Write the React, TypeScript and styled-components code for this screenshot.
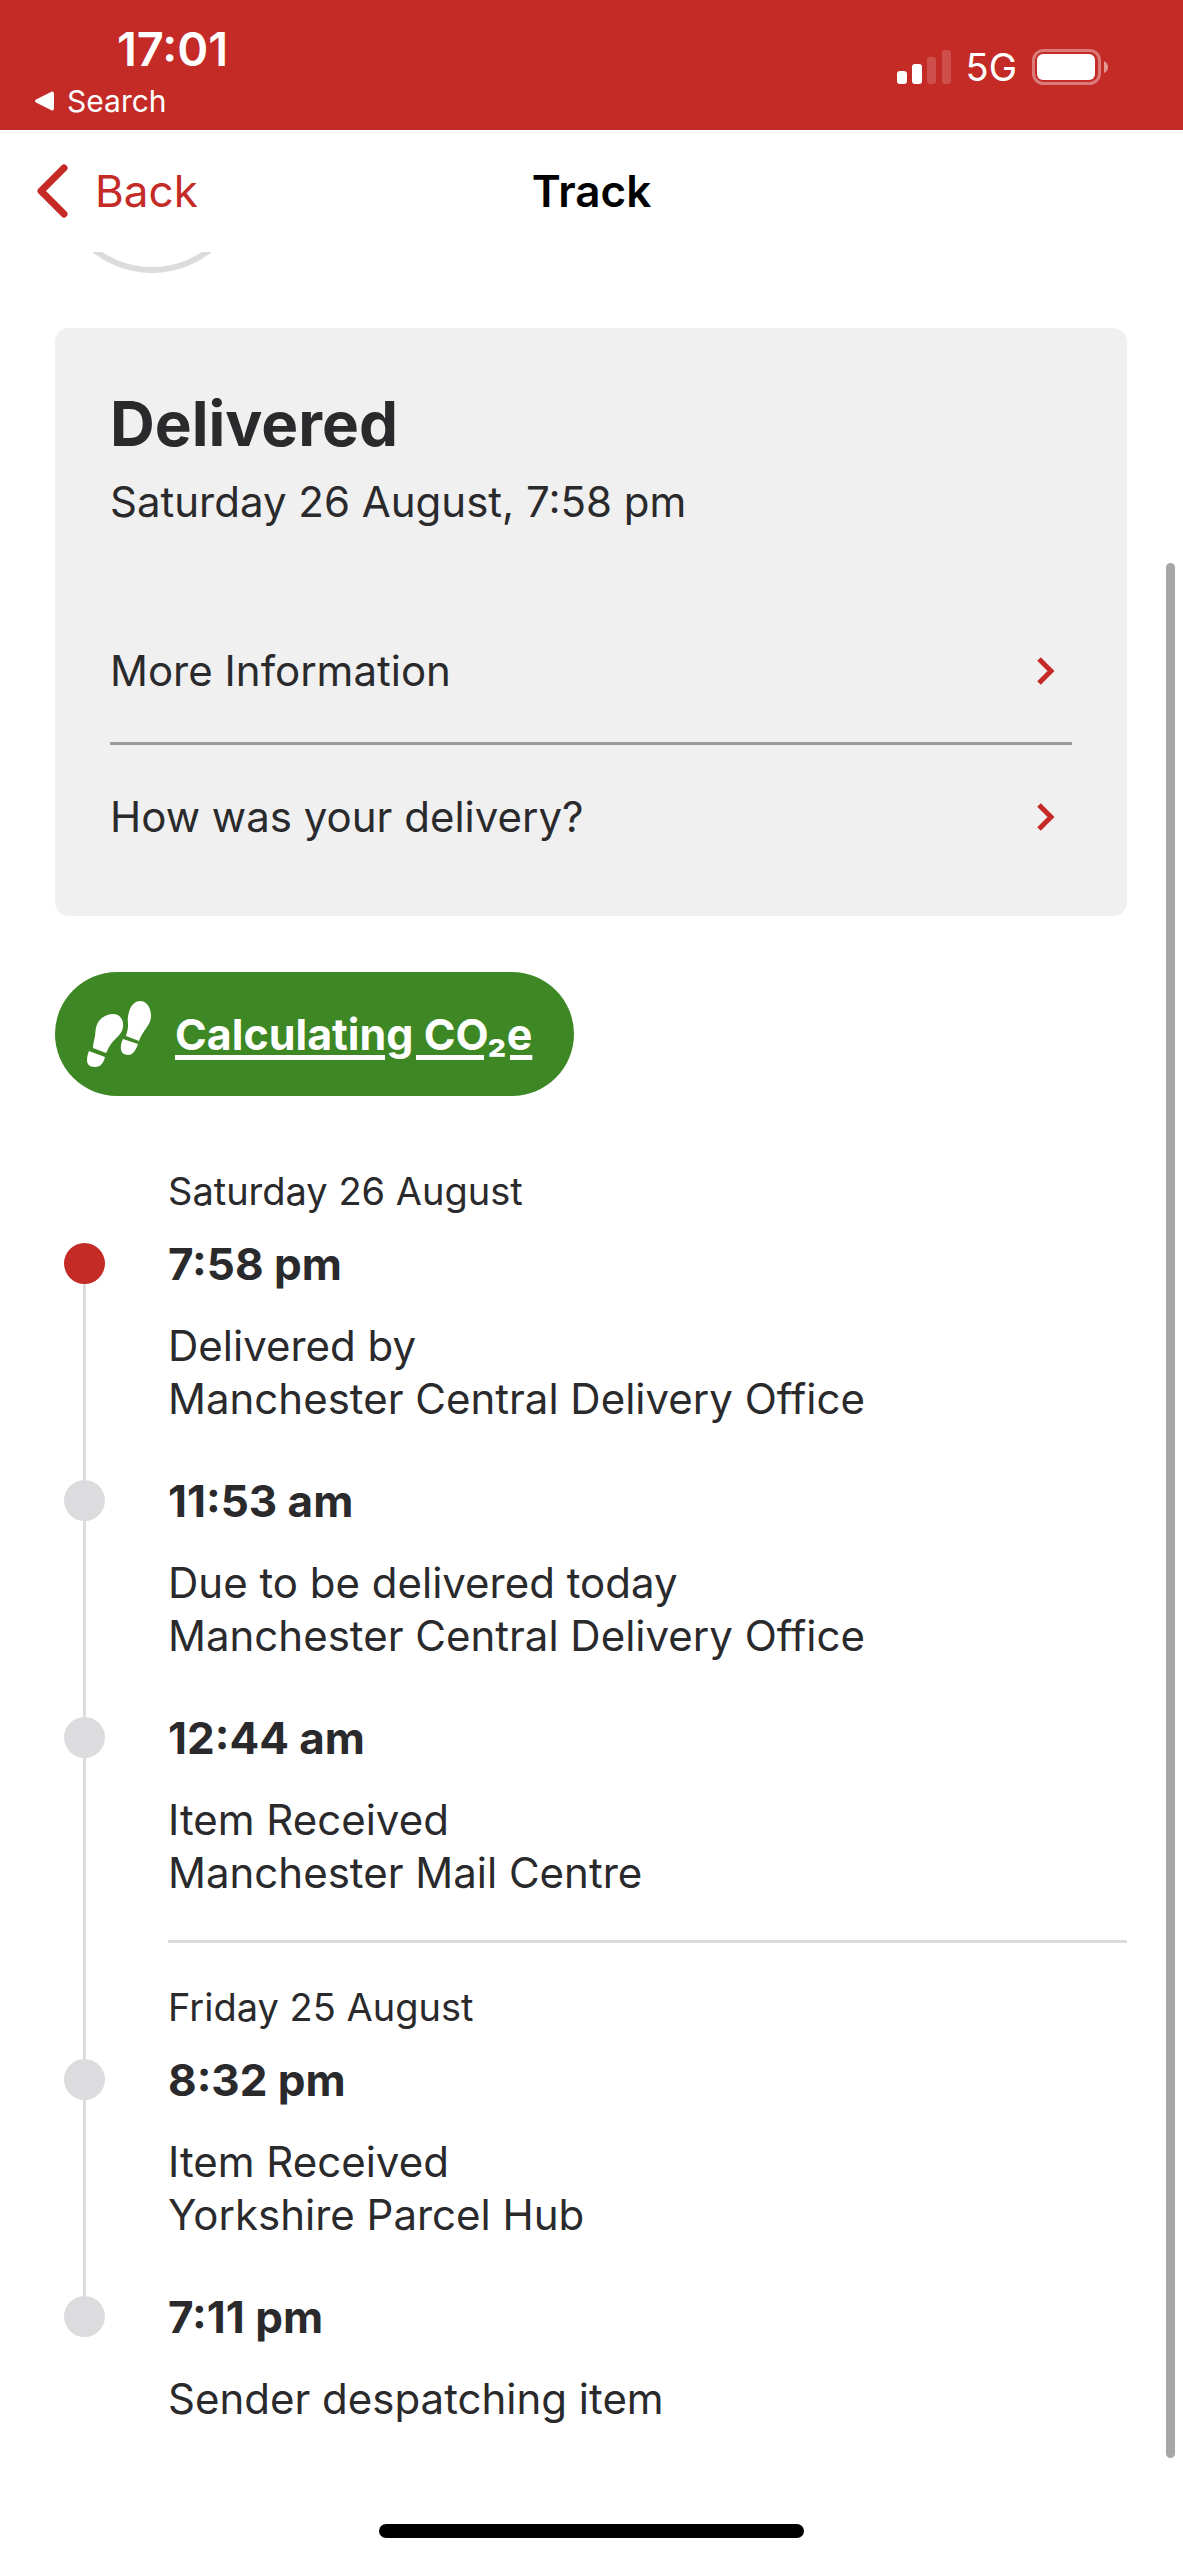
import React from "react";
import styled, { createGlobalStyle } from "styled-components";

const RED = "#c42b27";
const INK = "#2a2a2d";
const RULE = "#dcdcde";

const GlobalStyle = createGlobalStyle`
  *, *::before, *::after { box-sizing: border-box; }
  body {
    margin: 0;
    background: #fff;
    color: ${INK};
    font-family: Inter, "Liberation Sans", sans-serif;
  }
  h1, h2, h3, p, ol, ul { margin: 0; padding: 0; }
  ol, ul { list-style: none; }
  button { font: inherit; color: inherit; background: none; border: 0; padding: 0; cursor: pointer; }
`;

const Page = styled.div`
  position: relative;
  display: flex;
  flex-direction: column;
  min-height: 100vh;
`;

const StatusBar = styled.header`
  display: flex;
  justify-content: space-between;
  padding: 19px 75px 7px 34px;
  background: ${RED};
  color: #fff;
`;

const StatusLeft = styled.div`
  display: flex;
  flex-direction: column;
  align-items: flex-start;
`;

const Clock = styled.span`
  padding-left: 83px;
  font-size: 47px;
  line-height: 60px;
  font-weight: 600;
`;

const ReturnButton = styled.button`
  display: flex;
  align-items: center;
  gap: 12px;
  font-size: 30px;
  line-height: 44px;
`;

const StatusRight = styled.div`
  display: flex;
  align-items: center;
  gap: 15px;
  height: 96px;
  font-size: 38px;
`;

const NavBar = styled.nav`
  display: grid;
  grid-template-columns: 1fr auto 1fr;
  align-items: center;
  height: 122px;
  padding: 0 36px;
  font-size: 44px;
`;

const BackButton = styled.button`
  display: flex;
  align-items: center;
  justify-self: start;
  gap: 27px;
  color: ${RED};
`;

const NavTitle = styled.h1`
  font-size: 44px;
  font-weight: 600;
  color: #000;
`;

const Main = styled.main`
  flex: 1;
  padding: 0 56px 0 55px;
`;

const Peek = styled.div`
  height: 76px;
  padding-left: 37px;
`;

const Card = styled.section`
  padding: 56px 55px 28px;
  border-radius: 14px;
  background: #f0f0f0;
`;

const CardTitle = styled.h2`
  font-size: 62px;
  line-height: 80px;
  font-weight: 700;
`;

const CardTime = styled.p`
  margin-top: 11px;
  margin-bottom: 70px;
  font-size: 42px;
  line-height: 54px;
`;

const CardRow = styled.button`
  display: flex;
  align-items: center;
  justify-content: space-between;
  width: 100%;
  height: 143px;
  padding-right: 17px;
  font-size: 42px;
  text-align: left;
`;

const CardRule = styled.hr`
  height: 3px;
  margin: 0;
  border: 0;
  background: #9b9b9b;
`;

const CarbonLink = styled.a`
  display: inline-flex;
  align-items: center;
  gap: 22px;
  height: 124px;
  margin-top: 56px;
  padding: 0 42px 0 32px;
  border-radius: 62px;
  background: #3d8825;
  color: #fff;
  font-size: 43px;
  font-weight: 700;
  text-decoration: underline;
  text-decoration-thickness: 5px;
  text-underline-offset: 5px;
  vertical-align: top;
`;

const Timeline = styled.ol`
  padding-top: 72px;
`;

const Row = styled.div`
  display: grid;
  grid-template-columns: 59px 1fr;
  column-gap: 54px;
`;

const Rail = styled.div`
  display: flex;
  flex-direction: column;
  align-items: center;
`;

const Line = styled.span`
  flex: 1;
  width: 3px;
  background: ${RULE};
`;

const Dot = styled.span<{ $current?: boolean }>`
  width: 41px;
  height: 41px;
  border-radius: 50%;
  background: ${(p) => (p.$current ? RED : RULE)};
`;

const DayHead = styled.div<{ $ruled?: boolean }>`
  padding-top: ${(p) => (p.$ruled ? 41 : 0)}px;
  padding-bottom: 29px;
  border-top: ${(p) => (p.$ruled ? `3px solid ${RULE}` : "0")};
`;

const DayName = styled.h3`
  font-size: 38px;
  line-height: 46px;
  font-weight: 400;
`;

const Event = styled.div<{ $gap: number }>`
  padding-bottom: ${(p) => p.$gap}px;
`;

const EventTime = styled.p`
  margin-bottom: 34px;
  font-size: 44px;
  line-height: 42px;
  font-weight: 700;
`;

const EventText = styled.p`
  font-size: 42px;
  line-height: 53px;
`;

const Footer = styled.footer`
  display: flex;
  justify-content: center;
  padding-bottom: 22px;
`;

const HomeIndicator = styled.div`
  width: 36%;
  height: 14px;
  border-radius: 7px;
  background: #000;
`;

const ScrollThumb = styled.div`
  position: absolute;
  top: 22%;
  right: 8px;
  bottom: 4%;
  width: 9px;
  border-radius: 5px;
  background: #a6a6a6;
`;

const Signal = () => (
  <svg width="54" height="34" viewBox="0 0 54 34" fill="#fff" aria-hidden="true">
    <rect x="0" y="21" width="10" height="13" rx="3" />
    <rect x="15" y="14" width="10" height="20" rx="3" />
    <rect x="30" y="7" width="9" height="27" rx="3" opacity="0.17" />
    <rect x="45" y="0" width="9" height="34" rx="3" opacity="0.17" />
  </svg>
);

const Battery = () => (
  <svg width="76" height="36" viewBox="0 0 76 36" aria-hidden="true">
    <rect x="1.5" y="1.5" width="66" height="33" rx="10" fill="none" stroke="#fff" strokeOpacity="0.38" strokeWidth="3" />
    <rect x="5" y="5" width="58" height="26" rx="6" fill="#fff" />
    <path d="M72 12Q76 14 76 18T72 24Z" fill="#fff" fillOpacity="0.5" />
  </svg>
);

const Chevron = () => (
  <svg width="18" height="28" viewBox="0 0 18 28" fill="none" stroke={RED} strokeWidth="5" aria-hidden="true">
    <path d="M2 2 14 14 2 26" />
  </svg>
);

const Footprints = () => (
  <svg width="66" height="68" viewBox="0 0 66 68" fill="#fff" aria-hidden="true">
    <path d="M26 14C33 14 37 20 36 27C35 35 28 38 24 44C21 48 21 50 19 53L6 48C6 44 7 41 8 36C9 30 8 27 12 21C16 16 21 14 26 14Z" />
    <path d="M2 51L18 57C17 62 14 67 8 67C2 67 0 64 0 60C0 56 1 54 2 51Z" />
    <path d="M53 1C60 1 64 8 64 16C64 23 59 28 56 33C54 36 53 38 52 41L39 36C40 32 41 30 41 25C41 20 40 19 42 12C44 5 48 1 53 1Z" />
    <path d="M36 39L51 44C49 50 46 55 41 55C36 55 33 51 34 46C34 43 35 41 36 39Z" />
  </svg>
);

type EventData = { time: string; lines: string[]; current?: boolean };
type DayData = { day: string; events: EventData[] };

const days: DayData[] = [
  {
    day: "Saturday 26 August",
    events: [
      { time: "7:58 pm", lines: ["Delivered by", "Manchester Central Delivery Office"], current: true },
      { time: "11:53 am", lines: ["Due to be delivered today", "Manchester Central Delivery Office"] },
      { time: "12:44 am", lines: ["Item Received", "Manchester Mail Centre"] },
    ],
  },
  {
    day: "Friday 25 August",
    events: [
      { time: "8:32 pm", lines: ["Item Received", "Yorkshire Parcel Hub"] },
      { time: "7:11 pm", lines: ["Sender despatching item"] },
    ],
  },
];

export default function App() {
  return (
    <>
      <GlobalStyle />
      <Page>
        <StatusBar>
          <StatusLeft>
            <Clock>17:01</Clock>
            <ReturnButton type="button">
              <svg width="21" height="20" viewBox="0 0 21 20" fill="#fff" aria-hidden="true">
                <path d="M2 8.500 18 0.500Q20 0 20 3V17Q20 20 18 19.500L2 11.500Q0 10 2 8.500Z" />
              </svg>
              Search
            </ReturnButton>
          </StatusLeft>
          <StatusRight>
            <Signal />
            <span>5G</span>
            <Battery />
          </StatusRight>
        </StatusBar>

        <NavBar>
          <BackButton type="button">
            <svg width="32" height="54" viewBox="0 0 32 54" fill="none" stroke={RED} strokeWidth="7" strokeLinecap="round" strokeLinejoin="round" aria-hidden="true">
              <path d="M28 4 5 27 28 50" />
            </svg>
            Back
          </BackButton>
          <NavTitle>Track</NavTitle>
        </NavBar>

        <Main>
          <Peek>
            <svg width="120" height="22" viewBox="0 0 120 22" fill="none" aria-hidden="true">
              <circle cx="60" cy="-75" r="93" stroke={RULE} strokeWidth="6" />
            </svg>
          </Peek>

          <Card>
            <CardTitle>Delivered</CardTitle>
            <CardTime>Saturday 26 August, 7:58 pm</CardTime>
            <CardRow type="button">
              More Information
              <Chevron />
            </CardRow>
            <CardRule />
            <CardRow type="button">
              How was your delivery?
              <Chevron />
            </CardRow>
          </Card>

          <CarbonLink href="#carbon">
            <Footprints />
            <span>Calculating CO₂e</span>
          </CarbonLink>

          <Timeline>
            {days.map((day, d) => (
              <li key={day.day}>
                <Row>
                  <Rail>{d > 0 && <Line />}</Rail>
                  <DayHead $ruled={d > 0}>
                    <DayName>{day.day}</DayName>
                  </DayHead>
                </Row>
                <ol>
                  {day.events.map((event, e) => {
                    const lastOfDay = e === day.events.length - 1;
                    const last = lastOfDay && d === days.length - 1;
                    return (
                      <li key={event.time}>
                        <Row>
                          <Rail>
                            <Dot $current={event.current} />
                            {!last && <Line />}
                          </Rail>
                          <Event $gap={lastOfDay ? 41 : 55}>
                            <EventTime>{event.time}</EventTime>
                            {event.lines.map((line) => (
                              <EventText key={line}>{line}</EventText>
                            ))}
                          </Event>
                        </Row>
                      </li>
                    );
                  })}
                </ol>
              </li>
            ))}
          </Timeline>
        </Main>

        <Footer>
          <HomeIndicator />
        </Footer>
        <ScrollThumb />
      </Page>
    </>
  );
}
